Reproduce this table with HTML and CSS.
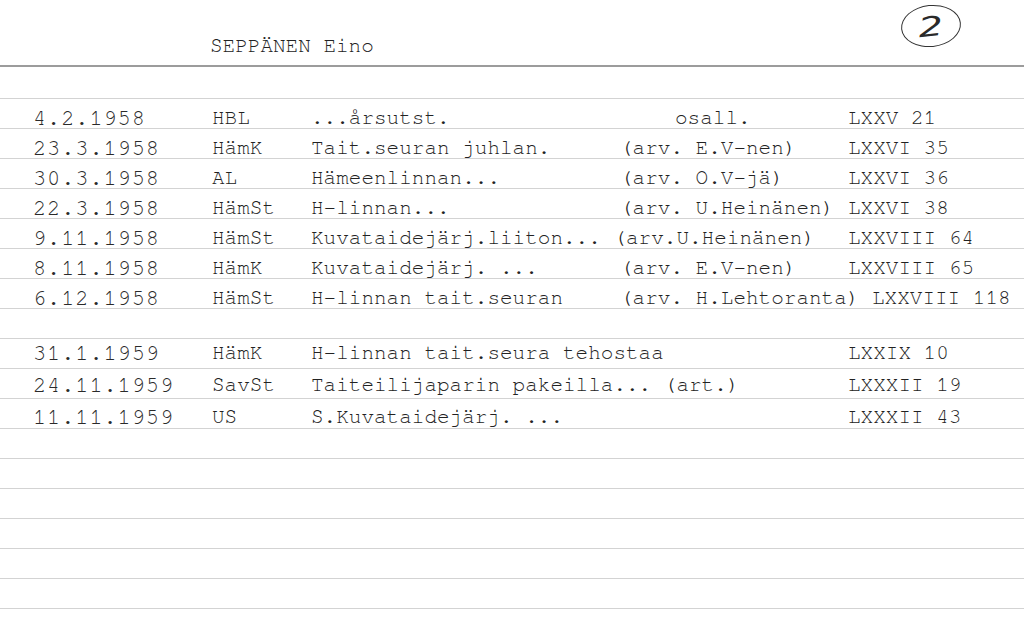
FILE: index.html
```html
<!DOCTYPE html>
<html lang="fi">
<head>
<meta charset="utf-8">
<title>SEPPÄNEN Eino</title>
<link rel="stylesheet" href="styles.css">
</head>
<body>
<div class="card">
  <header class="card-head"><span class="name">SEPPÄNEN Eino</span></header>
  <span class="mark"><span class="mark-digit">2</span></span>
  <main class="entries">
    <section class="group">
      <div class="row"><span class="date">4.2.1958</span><span class="paper">HBL</span><span class="title">...årsutst.</span><span class="arv osall">osall.</span><span class="ref">LXXV 21</span></div>
      <div class="row"><span class="date">23.3.1958</span><span class="paper">HämK</span><span class="title">Tait.seuran juhlan.</span><span class="arv">(arv. E.V-nen)</span><span class="ref">LXXVI 35</span></div>
      <div class="row"><span class="date">30.3.1958</span><span class="paper">AL</span><span class="title">Hämeenlinnan...</span><span class="arv">(arv. O.V-jä)</span><span class="ref">LXXVI 36</span></div>
      <div class="row"><span class="date">22.3.1958</span><span class="paper">HämSt</span><span class="title">H-linnan...</span><span class="arv">(arv. U.Heinänen)</span><span class="ref">LXXVI 38</span></div>
      <div class="row"><span class="date">9.11.1958</span><span class="paper">HämSt</span><span class="title span2">Kuvataidejärj.liiton... (arv.U.Heinänen)</span><span class="ref">LXXVIII 64</span></div>
      <div class="row"><span class="date">8.11.1958</span><span class="paper">HämK</span><span class="title">Kuvataidejärj. ...</span><span class="arv">(arv. E.V-nen)</span><span class="ref">LXXVIII 65</span></div>
      <div class="row"><span class="date">6.12.1958</span><span class="paper">HämSt</span><span class="title">H-linnan tait.seuran</span><span class="arv span2">(arv. H.Lehtoranta) LXXVIII 118</span></div>
    </section>
    <section class="group group-late">
      <div class="row"><span class="date">31.1.1959</span><span class="paper">HämK</span><span class="title span2">H-linnan tait.seura tehostaa</span><span class="ref">LXXIX 10</span></div>
      <div class="row"><span class="date">24.11.1959</span><span class="paper">SavSt</span><span class="title span2">Taiteilijaparin pakeilla... (art.)</span><span class="ref">LXXXII 19</span></div>
      <div class="row"><span class="date">11.11.1959</span><span class="paper">US</span><span class="title span2">S.Kuvataidejärj. ...</span><span class="ref">LXXXII 43</span></div>
    </section>
  </main>
</div>
</body>
</html>
```
FILE: styles.css
```css
* { box-sizing: border-box; }
html, body { margin: 0; padding: 0; background: #fff; }
.card {
  width: 1024px;
  height: 628px;
  position: relative;
  overflow: hidden;
  background: #fff;
  font-family: "Nimbus Mono PS", "Nimbus Mono L", "FreeMono", "Courier 10 Pitch", "Liberation Mono", monospace;
  font-size: 21px;
  color: #222;
}
.card-head {
  height: 67px;
  border-bottom: 2px solid #9c9c9c;
  padding-left: 210px;
  padding-bottom: 4px;
  display: flex;
  align-items: flex-end;
  line-height: 30px;
}
.mark {
  position: absolute;
  left: 901px;
  top: 5px;
  width: 60px;
  height: 42px;
  border: 1.5px solid #333;
  border-radius: 50%;
  display: flex;
  align-items: center;
  justify-content: center;
  transform: rotate(-6deg);
}
.mark-digit {
  font-family: "DejaVu Sans", sans-serif;
  font-style: italic;
  font-size: 27px;
  line-height: 1;
  color: #2a2a2a;
  transform: scaleX(1.45);
}
.entries {
  height: 561px;
  padding-top: 36px;
  background-image: repeating-linear-gradient(to bottom, transparent 0, transparent 29px, #d3d3d3 29px, #d3d3d3 30px);
  background-position: 0 2px;
}
.row {
  display: grid;
  grid-template-columns: 179px 99px 309px 228px auto;
  padding-left: 33px;
  height: 30px;
  line-height: 30px;
  white-space: nowrap;
}
.group-late { margin-top: 24px; }
.group-late .row { height: 32px; line-height: 32px; }
.date {
  font-size: 22px;
  letter-spacing: 0.9px;
  color: #2a2a2a;
}
.span2 { grid-column: span 2; }
.osall { padding-left: 55px; }
```
